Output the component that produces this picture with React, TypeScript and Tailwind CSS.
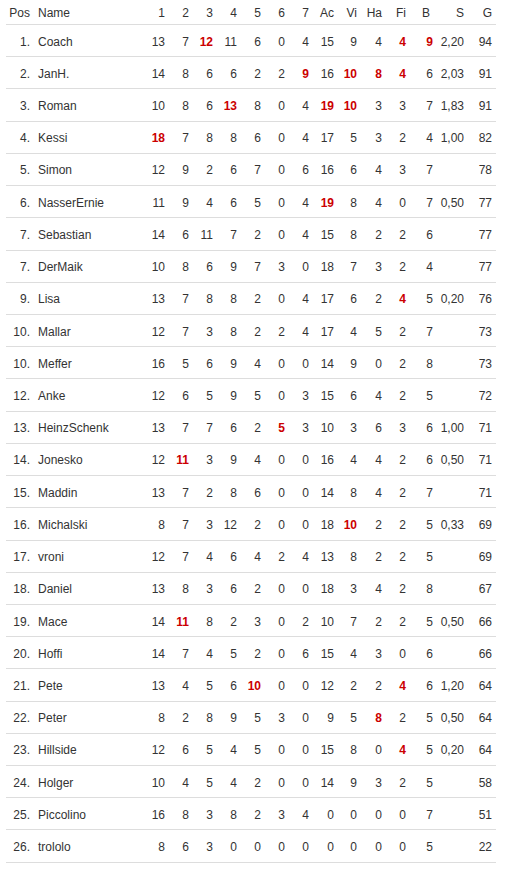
import React from "react";

type Cell = string | number;
// "*" suffix marks red highlighted value
const rows: [string, string, string][] = [
  ["1.", "Coach", "13 7 12* 11 6 0 4 15 9 4 4* 9* 2,20 94"],
  ["2.", "JanH.", "14 8 6 6 2 2 9* 16 10* 8* 4* 6 2,03 91"],
  ["3.", "Roman", "10 8 6 13* 8 0 4 19* 10* 3 3 7 1,83 91"],
  ["4.", "Kessi", "18* 7 8 8 6 0 4 17 5 3 2 4 1,00 82"],
  ["5.", "Simon", "12 9 2 6 7 0 6 16 6 4 3 7 _ 78"],
  ["6.", "NasserErnie", "11 9 4 6 5 0 4 19* 8 4 0 7 0,50 77"],
  ["7.", "Sebastian", "14 6 11 7 2 0 4 15 8 2 2 6 _ 77"],
  ["7.", "DerMaik", "10 8 6 9 7 3 0 18 7 3 2 4 _ 77"],
  ["9.", "Lisa", "13 7 8 8 2 0 4 17 6 2 4* 5 0,20 76"],
  ["10.", "Mallar", "12 7 3 8 2 2 4 17 4 5 2 7 _ 73"],
  ["10.", "Meffer", "16 5 6 9 4 0 0 14 9 0 2 8 _ 73"],
  ["12.", "Anke", "12 6 5 9 5 0 3 15 6 4 2 5 _ 72"],
  ["13.", "HeinzSchenk", "13 7 7 6 2 5* 3 10 3 6 3 6 1,00 71"],
  ["14.", "Jonesko", "12 11* 3 9 4 0 0 16 4 4 2 6 0,50 71"],
  ["15.", "Maddin", "13 7 2 8 6 0 0 14 8 4 2 7 _ 71"],
  ["16.", "Michalski", "8 7 3 12 2 0 0 18 10* 2 2 5 0,33 69"],
  ["17.", "vroni", "12 7 4 6 4 2 4 13 8 2 2 5 _ 69"],
  ["18.", "Daniel", "13 8 3 6 2 0 0 18 3 4 2 8 _ 67"],
  ["19.", "Mace", "14 11* 8 2 3 0 2 10 7 2 2 5 0,50 66"],
  ["20.", "Hoffi", "14 7 4 5 2 0 6 15 4 3 0 6 _ 66"],
  ["21.", "Pete", "13 4 5 6 10* 0 0 12 2 2 4* 6 1,20 64"],
  ["22.", "Peter", "8 2 8 9 5 3 0 9 5 8* 2 5 0,50 64"],
  ["23.", "Hillside", "12 6 5 4 5 0 0 15 8 0 4* 5 0,20 64"],
  ["24.", "Holger", "10 4 5 4 2 0 0 14 9 3 2 5 _ 58"],
  ["25.", "Piccolino", "16 8 3 8 2 3 4 0 0 0 0 7 _ 51"],
  ["26.", "trololo", "8 6 3 0 0 0 0 0 0 0 0 5 _ 22"],
];

const headers = ["1", "2", "3", "4", "5", "6", "7", "Ac", "Vi", "Ha", "Fi"];

const gridCols =
  "grid grid-cols-[28px_111px_24px_24px_24px_24px_24px_24px_24px_25px_23px_25px_24px_27px_31px_28px]";

function Val({ v }: { v: Cell }) {
  const s = String(v);
  if (s === "_") return <div className="pr-[4px] text-right" />;
  const red = s.endsWith("*");
  const t = red ? s.slice(0, -1) : s;
  return (
    <div
      className={
        "pr-[4px] text-right " + (red ? "font-bold text-[#cc0000]" : "")
      }
    >
      {t}
    </div>
  );
}

export default function App() {
  return (
    <div
      className="bg-white w-[510px] h-[870px] text-[12px] text-[#333333]"
      style={{ fontFamily: '"Liberation Sans", Arial, sans-serif' }}
    >
      <div className="ml-[6px] w-[490px]">
        <div
          className={
            gridCols + " h-[25px] items-center border-b border-[#dddddd] pt-[1px]"
          }
        >
          <div className="pr-[4px] text-right">Pos</div>
          <div className="pl-[4px]">Name</div>
          {headers.map((h) => (
            <div key={h} className="pr-[4px] text-right">
              {h}
            </div>
          ))}
          <div className="pl-[12px]">B</div>
          <div className="pr-[4px] text-right">S</div>
          <div className="pr-[4px] text-right">G</div>
        </div>
        {rows.map(([pos, name, vals], i) => (
          <div
            key={i}
            className={
              gridCols + " h-[32.23px] items-center border-b border-[#dddddd] pt-[2px]"
            }
          >
            <div className="pr-[4px] text-right">{pos}</div>
            <div className="pl-[4px] whitespace-nowrap">{name}</div>
            {vals.split(" ").map((v, j) => (
              <Val key={j} v={v} />
            ))}
          </div>
        ))}
      </div>
    </div>
  );
}
